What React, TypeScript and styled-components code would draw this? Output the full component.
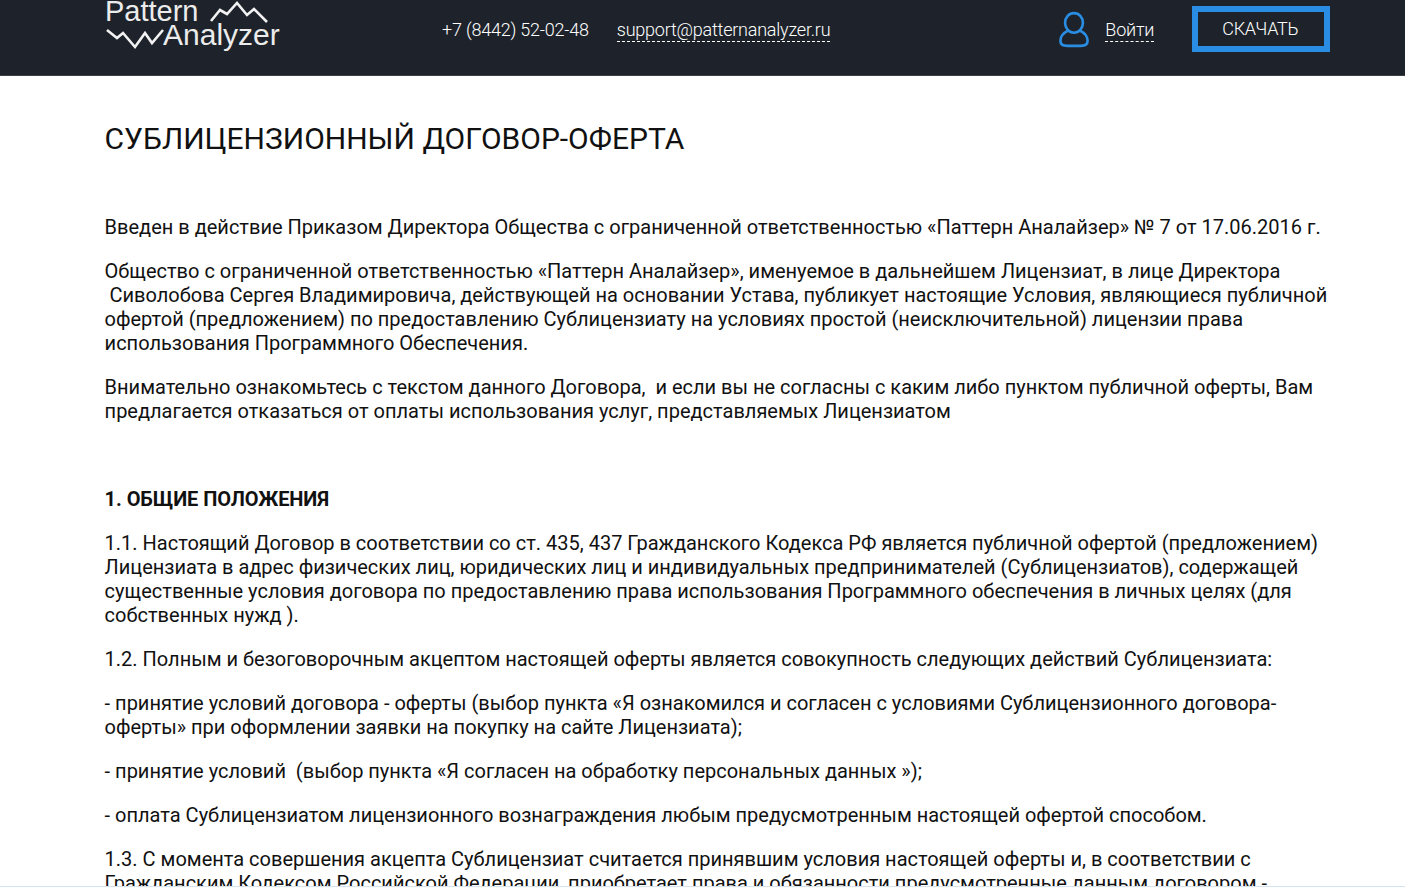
import React from "react";
import styled, { createGlobalStyle } from "styled-components";

const GlobalStyle = createGlobalStyle`
  html, body {
    margin: 0;
    padding: 0;
    height: 887px;
    overflow: hidden;
    background: #fff;
    font-family: Roboto, "Liberation Sans", sans-serif;
    color: #111;
  }
`;

const Header = styled.header`
  height: 75px;
  background: #1e232b;
  border-bottom: 1px solid #3a3f45;
  display: flex;
  align-items: flex-start;
  padding-left: 105px;
`;

const Logo = styled.div`
  position: relative;
  width: 176px;
  height: 52px;
  flex: none;
  font-family: "Liberation Sans", Arial, sans-serif;
  line-height: 30px;
  color: #ececec;
`;

const LogoTop = styled.span`
  position: absolute;
  left: 0;
  top: -4px;
  font-size: 29px;
`;

const LogoBottom = styled.span`
  position: absolute;
  left: 58px;
  top: 20px;
  font-size: 30px;
`;

const LogoWave = styled.svg`
  position: absolute;
  left: 0;
  top: 0;
  fill: none;
  stroke: #f2f2f2;
  stroke-width: 2.6;
`;

const Contacts = styled.div`
  display: flex;
  gap: 28px;
  margin-left: 161px;
  margin-top: 19px;
  font-size: 18px;
  line-height: 22px;
  font-weight: 300;
  letter-spacing: -0.22px;
  color: #fff;
`;

const DashedLink = styled.a`
  color: #fff;
  border-bottom: 1px dashed #fff;
  height: 22px;
`;

const Login = styled.div`
  display: flex;
  align-items: flex-start;
  gap: 16px;
  margin-left: 229px;
  margin-top: 11px;
  font-size: 18px;
  line-height: 22px;
  font-weight: 300;
  letter-spacing: -0.2px;
`;

const LoginLink = styled(DashedLink)`
  margin-top: 8px;
`;

const Download = styled.button`
  width: 138px;
  height: 46px;
  margin-left: 38px;
  margin-top: 6px;
  box-sizing: border-box;
  background: transparent;
  border: 6px solid #2a8de4;
  color: #fff;
  font-family: inherit;
  font-size: 18px;
  font-weight: 300;
  letter-spacing: -0.3px;
  padding: 0 2px 2px 0;
`;

const Main = styled.main`
  padding: 45px 75px 0 104.6px;
`;

const Title = styled.h1`
  margin: 0 0 58px;
  font-size: 30px;
  line-height: 36px;
  font-weight: 400;
`;

const Paragraph = styled.p`
  margin: 0 0 20px;
  font-size: 20px;
  line-height: 24px;
`;

const PreLine = styled(Paragraph)`
  white-space: pre-line;
`;

const Section = styled.h2`
  margin: 64px 0 20px;
  font-size: 20px;
  line-height: 24px;
  font-weight: 700;
  letter-spacing: -0.07px;
`;

const BottomLine = styled.div`
  position: fixed;
  left: 0;
  right: 0;
  bottom: 0;
  height: 1px;
  background: #d5e3ef;
`;

const paragraphsIntro = [
  "Введен в действие Приказом Директора Общества с ограниченной ответственностью «Паттерн Аналайзер» № 7 от 17.06.2016 г.",
  "Общество с ограниченной ответственностью «Паттерн Аналайзер», именуемое в дальнейшем Лицензиат, в лице Директора\n\u00a0Сиволобова Сергея Владимировича, действующей на основании Устава, публикует настоящие Условия, являющиеся публичной офертой (предложением) по предоставлению Сублицензиату на условиях простой (неисключительной) лицензии права использования Программного Обеспечения.",
  "Внимательно ознакомьтесь с текстом данного Договора,\u00a0 и если вы не согласны с каким либо пунктом публичной оферты, Вам предлагается отказаться от оплаты использования услуг, представляемых Лицензиатом",
];

const paragraphsGeneral = [
  "1.1. Настоящий Договор в соответствии со ст. 435, 437 Гражданского Кодекса РФ является публичной офертой (предложением) Лицензиата в адрес физических лиц, юридических лиц и индивидуальных предпринимателей (Сублицензиатов), содержащей существенные условия договора по предоставлению права использования Программного обеспечения в личных целях (для собственных нужд ).",
  "1.2. Полным и безоговорочным акцептом настоящей оферты является совокупность следующих действий Сублицензиата:",
  "- принятие условий договора - оферты (выбор пункта «Я ознакомился и согласен с условиями Сублицензионного договора-оферты» при оформлении заявки на покупку на сайте Лицензиата);",
  "- принятие условий\u00a0 (выбор пункта «Я согласен на обработку персональных данных »);",
  "- оплата Сублицензиатом лицензионного вознаграждения любым предусмотренным настоящей офертой способом.",
  "1.3. С момента совершения акцепта Сублицензиат считается принявшим условия настоящей оферты и, в соответствии с Гражданским Кодексом Российской Федерации, приобретает права и обязанности предусмотренные данным договором -",
];

export default function App() {
  return (
    <>
      <GlobalStyle />
      <Header>
        <Logo>
          <LogoTop>Pattern</LogoTop>
          <LogoWave width="176" height="52" viewBox="0 0 176 52">
            <path d="M106 21 L115 10 L122 14 L132 3 L142 15 L149 9 L162 22" />
            <path d="M2 30 L12 38 L18 33 L30 47 L40 33 L47 43 L58 30" />
          </LogoWave>
          <LogoBottom>Analyzer</LogoBottom>
        </Logo>
        <Contacts>
          <span>+7 (8442) 52-02-48</span>
          <DashedLink>support@patternanalyzer.ru</DashedLink>
        </Contacts>
        <Login>
          <svg width="30" height="37" viewBox="0 0 32 38" fill="none" stroke="#2a8de4" strokeWidth="2.8">
            <ellipse cx="16" cy="12" rx="9.5" ry="10.5" />
            <path d="M10 20 C4 23 1.5 27 1.5 31 C1.5 35 5 36.5 9 36.5 H23 C27 36.5 30.5 35 30.5 31 C30.5 27 28 23 22 20" />
          </svg>
          <LoginLink>Войти</LoginLink>
        </Login>
        <Download>СКАЧАТЬ</Download>
      </Header>
      <Main>
        <Title>СУБЛИЦЕНЗИОННЫЙ ДОГОВОР-ОФЕРТА</Title>
        {paragraphsIntro.map((text) => (
          <PreLine key={text}>{text}</PreLine>
        ))}
        <Section>1. ОБЩИЕ ПОЛОЖЕНИЯ</Section>
        {paragraphsGeneral.map((text) => (
          <Paragraph key={text}>{text}</Paragraph>
        ))}
      </Main>
      <BottomLine />
    </>
  );
}
